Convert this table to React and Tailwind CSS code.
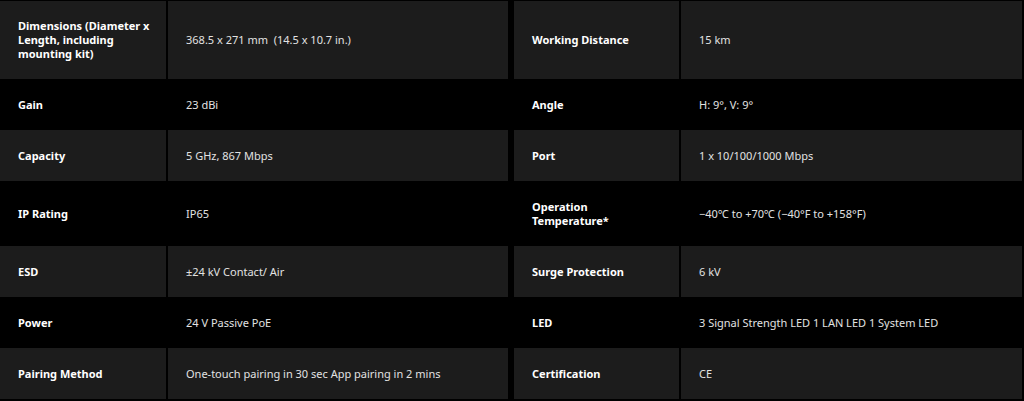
import React from "react";

const rows = [
  ["Dimensions (Diameter x Length, including mounting kit)", "368.5 x 271 mm\u00a0 (14.5 x 10.7 in.)", "Working Distance", "15 km"],
  ["Gain", "23 dBi", "Angle", "H: 9°, V: 9°"],
  ["Capacity", "5 GHz, 867 Mbps", "Port", "1 x 10/100/1000 Mbps"],
  ["IP Rating", "IP65", "Operation Temperature*", "\u221240℃ to +70℃ (\u221240°F to +158°F)"],
  ["ESD", "±24 kV Contact/ Air", "Surge Protection", "6 kV"],
  ["Power", "24 V Passive PoE", "LED", "3 Signal Strength LED 1 LAN LED 1 System LED"],
  ["Pairing Method", "One-touch pairing in 30 sec App pairing in 2 mins", "Certification", "CE"],
];

function Cell({ w, gray, bold, first, children }) {
  return (
    <div
      className={`${w} flex items-center ${first ? "py-[18px]" : "py-[18.5px]"} pl-[18px] pr-[14px] text-[11px] leading-[14px] ${
        gray ? "bg-[#1c1c1c]" : "bg-black"
      } ${bold ? "font-bold text-white" : "font-normal text-[#e2e2e2]"}`}
    >
      <span>{children}</span>
    </div>
  );
}

export default function App() {
  return (
    <div
      className="w-[1024px] h-[401px] bg-black pt-[1px] overflow-hidden flex flex-col"
      style={{ fontFamily: '"Noto Sans", "Open Sans", sans-serif' }}
    >
      {rows.map((r, i) => {
        const gray = i % 2 === 0;
        const first = i === 0;
        return (
          <div key={i} className="flex">
            <div className="flex gap-[2px]">
              <Cell w="w-[166px]" gray={gray} bold first={first}>{r[0]}</Cell>
              <Cell w="w-[340px]" gray={gray} first={first}>{r[1]}</Cell>
            </div>
            <div className="w-[6px] bg-black" />
            <div className="flex gap-[2px]">
              <Cell w="w-[165px]" gray={gray} bold first={first}>{r[2]}</Cell>
              <Cell w="w-[341px]" gray={gray} first={first}>{r[3]}</Cell>
            </div>
          </div>
        );
      })}
    </div>
  );
}
